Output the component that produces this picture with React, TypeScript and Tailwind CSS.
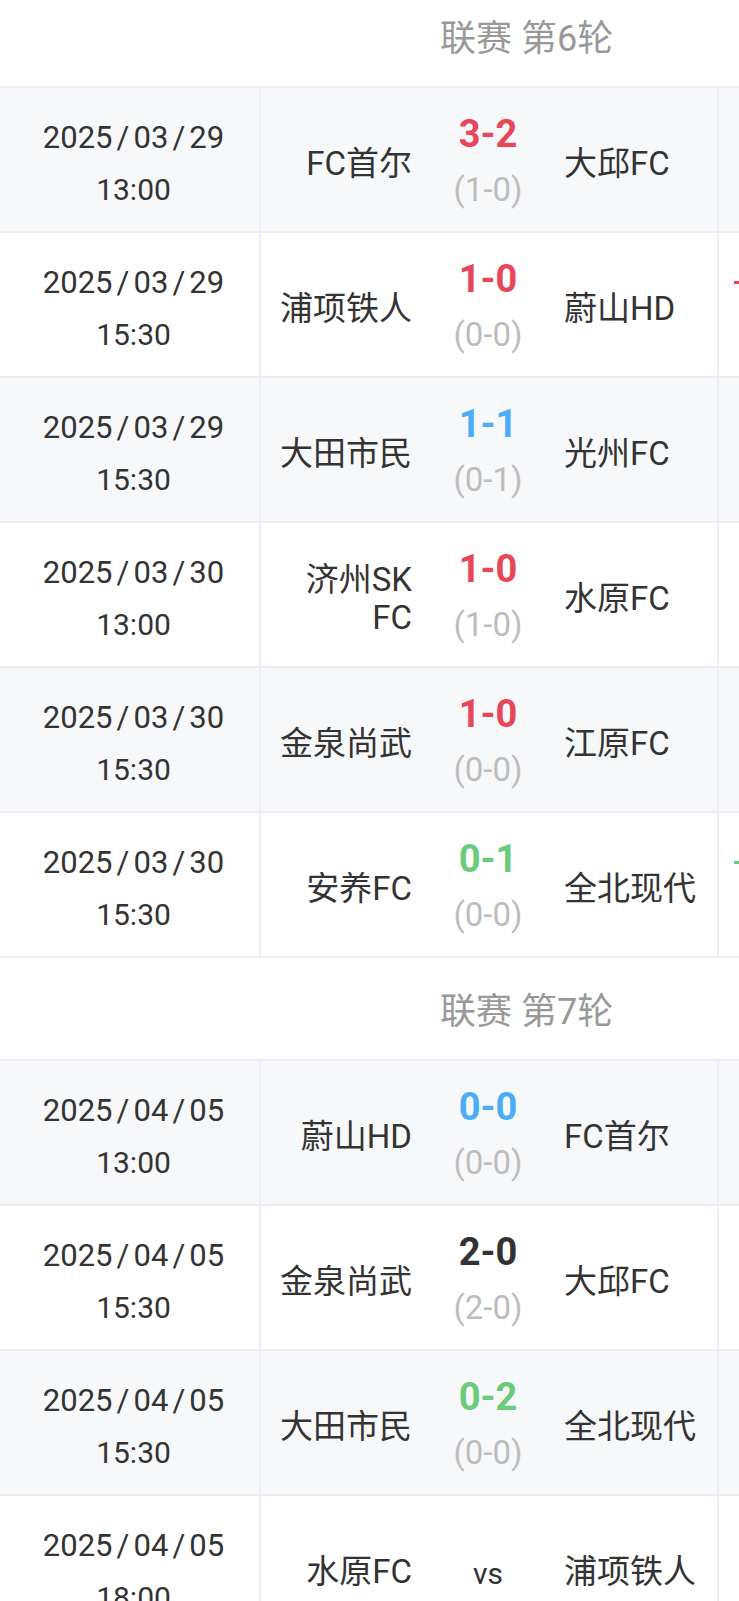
import React from "react";

type Match = {
  date: string;
  time: string;
  home: string;
  away: string;
  score?: string;
  half?: string;
  color?: string;
  mark?: string;
};

const round6: Match[] = [
  { date: "2025/03/29", time: "13:00", home: "FC首尔", away: "大邱FC", score: "3-2", half: "(1-0)", color: "text-[#e8475a]" },
  { date: "2025/03/29", time: "15:30", home: "浦项铁人", away: "蔚山HD", score: "1-0", half: "(0-0)", color: "text-[#e8475a]", mark: "bg-[#e8475a]" },
  { date: "2025/03/29", time: "15:30", home: "大田市民", away: "光州FC", score: "1-1", half: "(0-1)", color: "text-[#4badf7]" },
  { date: "2025/03/30", time: "13:00", home: "济州SK FC", away: "水原FC", score: "1-0", half: "(1-0)", color: "text-[#e8475a]" },
  { date: "2025/03/30", time: "15:30", home: "金泉尚武", away: "江原FC", score: "1-0", half: "(0-0)", color: "text-[#e8475a]" },
  { date: "2025/03/30", time: "15:30", home: "安养FC", away: "全北现代", score: "0-1", half: "(0-0)", color: "text-[#6acb7b]", mark: "bg-[#6acb7b]" },
];

const round7: Match[] = [
  { date: "2025/04/05", time: "13:00", home: "蔚山HD", away: "FC首尔", score: "0-0", half: "(0-0)", color: "text-[#4badf7]" },
  { date: "2025/04/05", time: "15:30", home: "金泉尚武", away: "大邱FC", score: "2-0", half: "(2-0)", color: "text-[#333333]" },
  { date: "2025/04/05", time: "15:30", home: "大田市民", away: "全北现代", score: "0-2", half: "(0-0)", color: "text-[#6acb7b]" },
  { date: "2025/04/05", time: "18:00", home: "水原FC", away: "浦项铁人" },
];

function DateText({ value }: { value: string }) {
  const parts = value.split("/");
  return (
    <div className="flex items-center text-[31px]">
      {parts.map((p, i) => (
        <React.Fragment key={i}>
          {i > 0 && <span className="inline-block w-[21px] text-center">/</span>}
          <span>{p}</span>
        </React.Fragment>
      ))}
    </div>
  );
}

function Header({ title, first }: { title: string; first?: boolean }) {
  return (
    <div
      className={`flex h-[103px] items-center border-b-2 border-[#eceef3] bg-white pl-[440px] pt-[6px] text-[36px] text-[#999999] ${
        first ? "mt-[-15px]" : ""
      }`}
    >
      {title}
    </div>
  );
}

function Row({ m, i }: { m: Match; i: number }) {
  return (
    <div
      className={`flex h-[145px] border-b-2 border-[#eceef3] ${
        i % 2 === 0 ? "bg-[#f7f8fa]" : "bg-white"
      }`}
    >
      <div className="flex w-[261px] shrink-0 flex-col items-center border-r-2 border-[#eceef3] pl-[8px] pt-[24px] text-[30px] leading-[52px] text-[#333333]">
        <DateText value={m.date} />
        <div>{m.time}</div>
      </div>
      <div className="flex w-[458px] shrink-0 border-r-2 border-[#eceef3]">
        <div className="flex w-[151px] shrink-0 items-center justify-end pl-[8px] pt-[9px] text-right text-[33px] leading-[38px] text-[#333333]">
          {m.home}
        </div>
        <div className="flex w-[152px] shrink-0 flex-col items-center">
          {m.score ? (
            <>
              <div className={`pt-[19px] text-[38px] font-bold leading-[54px] ${m.color}`}>{m.score}</div>
              <div className="text-[33px] leading-[58px] text-[#bdbdbd]">{m.half}</div>
            </>
          ) : (
            <div className="flex h-full items-center pt-[12px] text-[30px] text-[#333333]">vs</div>
          )}
        </div>
        <div className="flex flex-1 items-center pt-[9px] text-[33px] leading-[38px] text-[#333333]">
          {m.away}
        </div>
      </div>
      <div className="w-[300px] shrink-0 pl-[15px] pt-[48px]">
        {m.mark && <div className={`h-[3px] w-[12px] ${m.mark}`} />}
      </div>
    </div>
  );
}

export default function App() {
  return (
    <div className="h-[1601px] w-[739px] overflow-hidden bg-white font-['Roboto','Noto_Sans_CJK_SC',sans-serif]">
      <div className="w-[1040px]">
        <Header title="联赛 第6轮" first />
        {round6.map((m, i) => (
          <Row key={`a${i}`} m={m} i={i} />
        ))}
        <Header title="联赛 第7轮" />
        {round7.map((m, i) => (
          <Row key={`b${i}`} m={m} i={i} />
        ))}
      </div>
    </div>
  );
}
